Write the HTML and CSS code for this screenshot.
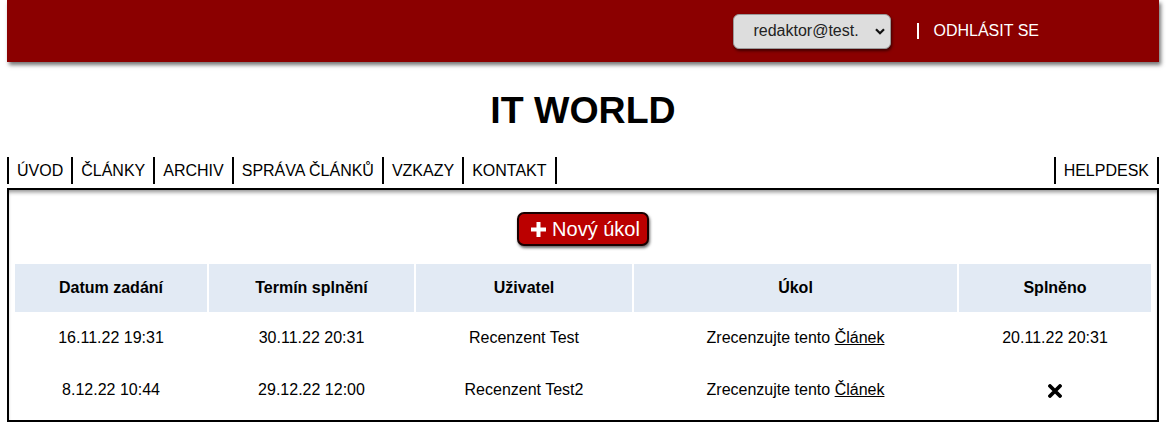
FILE: index.html
```html
<!DOCTYPE html>
<html lang="cs">
<head>
<meta charset="utf-8">
<title>IT WORLD – Úkoly</title>
<link rel="stylesheet" href="styles.css">
</head>
<body>
<div class="page">
  <header class="topbar">
    <div class="user-select">
      <span class="user-select-text">redaktor@test.</span>
      <svg class="chevron" width="10" height="7" viewBox="0 0 10 7"><path d="M1 1.2 L5 5.2 L9 1.2" fill="none" stroke="#111" stroke-width="2.2"/></svg>
    </div>
    <a class="logout" href="#">ODHLÁSIT SE</a>
  </header>

  <h1 class="title">IT WORLD</h1>

  <nav class="nav">
    <ul class="nav-left">
      <li class="nav-item">ÚVOD</li>
      <li class="nav-item">ČLÁNKY</li>
      <li class="nav-item">ARCHIV</li>
      <li class="nav-item">SPRÁVA ČLÁNKŮ</li>
      <li class="nav-item">VZKAZY</li>
      <li class="nav-item nav-last">KONTAKT</li>
    </ul>
    <ul class="nav-right">
      <li class="nav-item nav-last">HELPDESK</li>
    </ul>
  </nav>

  <main class="content">
    <div class="actions">
      <button class="btn-new" type="button">
        <svg class="plus" width="15" height="15" viewBox="0 0 15 15"><path d="M5.5 0 H9.5 V5.5 H15 V9.5 H9.5 V15 H5.5 V9.5 H0 V5.5 H5.5 Z" fill="#fff"/></svg>
        <span>Nový úkol</span>
      </button>
    </div>
    <table class="tasks">
      <colgroup>
        <col class="c1"><col class="c2"><col class="c3"><col class="c4"><col class="c5">
      </colgroup>
      <thead>
        <tr>
          <th>Datum zadání</th>
          <th>Termín splnění</th>
          <th>Uživatel</th>
          <th>Úkol</th>
          <th>Splněno</th>
        </tr>
      </thead>
      <tbody>
        <tr>
          <td>16.11.22 19:31</td>
          <td>30.11.22 20:31</td>
          <td>Recenzent Test</td>
          <td>Zrecenzujte tento <a href="#">Článek</a></td>
          <td>20.11.22 20:31</td>
        </tr>
        <tr>
          <td>8.12.22 10:44</td>
          <td>29.12.22 12:00</td>
          <td>Recenzent Test2</td>
          <td>Zrecenzujte tento <a href="#">Článek</a></td>
          <td><svg class="cross" width="14" height="14" viewBox="0 0 14 14"><path d="M2 2 L12 12 M12 2 L2 12" stroke="#000" stroke-width="3.8" stroke-linecap="round"/></svg></td>
        </tr>
      </tbody>
    </table>
  </main>
</div>
</body>
</html>
```
FILE: styles.css
```css
html, body {
  margin: 0;
  padding: 0;
  background: #fff;
}
body {
  font-family: "Liberation Sans", Arial, sans-serif;
  font-size: 16px;
  color: #000;
}
.page {
  padding: 0 7px;
}
.topbar {
  height: 62px;
  background: #8b0000;
  box-shadow: 2px 3px 4px rgba(0, 0, 0, 0.55);
  display: flex;
  align-items: center;
  justify-content: flex-end;
  padding-right: 120px;
}
.user-select {
  box-sizing: border-box;
  width: 158px;
  height: 35px;
  background: #dddddd;
  border: 1px solid #9a9a9a;
  border-radius: 6px;
  box-shadow: 1px 2px 3px rgba(0, 0, 0, 0.55);
  display: flex;
  align-items: center;
  padding: 0 5px 0 19px;
  color: #222;
}
.user-select-text {
  flex: 1;
}
.chevron {
  display: block;
}
.logout {
  margin-left: 26px;
  border-left: 2px solid #fff;
  padding-left: 14px;
  line-height: 16px;
  color: #fff;
  text-decoration: none;
}
.title {
  margin: 26px 0 0;
  text-align: center;
  font-size: 37.5px;
  line-height: 44px;
  font-weight: bold;
}
.nav {
  margin-top: 25px;
  display: flex;
  justify-content: space-between;
}
.nav ul {
  list-style: none;
  margin: 0;
  padding: 0;
  display: flex;
}
.nav-item {
  height: 27px;
  line-height: 27px;
  border-left: 2px solid #000;
  padding: 0 8px;
}
.nav-last {
  border-right: 2px solid #000;
}
.content {
  margin-top: 4px;
  border: 2px solid #000;
  box-shadow: inset 0 4px 4px -2px rgba(0, 0, 0, 0.45);
  padding: 22px 4px 4px;
}
.actions {
  display: flex;
  justify-content: center;
  margin-bottom: 18px;
}
.btn-new {
  box-sizing: border-box;
  height: 34px;
  display: flex;
  align-items: center;
  gap: 6px;
  padding: 0 7px 0 12px;
  background: #bb0000;
  color: #fff;
  border: 2px solid #1a0000;
  border-radius: 7px;
  box-shadow: 1px 2px 3px rgba(0, 0, 0, 0.6);
  font-family: "Liberation Sans", Arial, sans-serif;
  font-size: 20px;
}
.plus {
  display: block;
}
.tasks {
  width: 100%;
  border-collapse: separate;
  border-spacing: 2px 0;
  table-layout: fixed;
}
.c1 { width: 192px; }
.c2 { width: 205px; }
.c3 { width: 216px; }
.c4 { width: 323px; }
.c5 { width: 192px; }
.tasks th {
  height: 48px;
  padding: 0;
  background: #e2eaf4;
  font-weight: bold;
  text-align: center;
}
.tasks td {
  height: 52px;
  padding: 0;
  text-align: center;
}
.tasks a {
  color: #000;
  text-decoration: underline;
}
.cross {
  display: inline-block;
  vertical-align: middle;
}
```
